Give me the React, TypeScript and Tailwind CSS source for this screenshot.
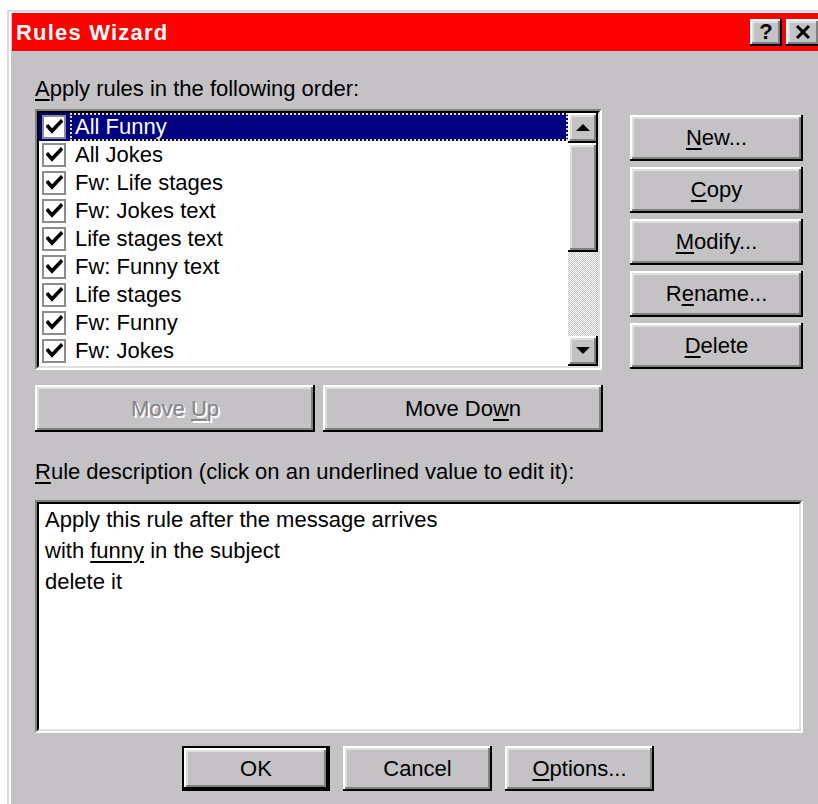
import React from "react";

const face = "bg-[#c4c2c5]";
const raised =
  "bg-[#c4c2c5] shadow-[inset_-2px_-2px_0_#000,inset_2px_2px_0_#fff,inset_-4px_-4px_0_#808080,inset_4px_4px_0_#dfdfdf]";
const font = "font-['Liberation_Sans',Arial,sans-serif]";

const rules = [
  "All Funny",
  "All Jokes",
  "Fw: Life stages",
  "Fw: Jokes text",
  "Life stages text",
  "Fw: Funny text",
  "Life stages",
  "Fw: Funny",
  "Fw: Jokes",
];

function Key({ children }: { children: React.ReactNode }) {
  return <span className="underline decoration-2 underline-offset-[3px]">{children}</span>;
}

function Check() {
  return (
    <div className="ml-[3px] flex h-[24px] w-[24px] shrink-0 items-center justify-center border-2 border-[#8c8b8e] bg-white">
      <svg width="17" height="16" viewBox="0 0 17 16">
        <polyline points="2,7.5 6,12 15,2.5" fill="none" stroke="#000" strokeWidth="3.6" strokeLinecap="square" />
      </svg>
    </div>
  );
}

function Arrow({ up }: { up?: boolean }) {
  return (
    <svg width="14" height="8" viewBox="0 0 14 8">
      <polygon points={up ? "7,0 14,7 0,7" : "0,0 14,0 7,7"} fill="#000" />
    </svg>
  );
}

function Btn({
  children,
  className = "",
  disabled,
}: {
  children: React.ReactNode;
  className?: string;
  disabled?: boolean;
}) {
  return (
    <div
      className={`${raised} flex items-center justify-center text-[22px] leading-none ${
        disabled ? "text-[#86858a] [text-shadow:2px_2px_0_#fff]" : "text-black"
      } ${className}`}
    >
      <span>{children}</span>
    </div>
  );
}

export default function App() {
  return (
    <div className={`${font} h-[804px] w-[818px] overflow-hidden bg-white pl-[7px] pt-[10px]`}>
      {/* window frame */}
      <div className="w-[840px] border-l-2 border-t-2 border-[#dcdbdd]">
        <div className={`${face} h-[800px] border-l-2 border-t-[1px] border-white pl-[1px]`}>
          {/* title bar */}
          <div className="flex h-[38px] items-center justify-between bg-[#ff0000] pl-[4px]">
            <span className="text-[22px] font-bold tracking-[1.2px] text-white">Rules Wizard</span>
            <div className="mr-[27px] flex gap-[4px]">
              <div className={`${raised} flex h-[27px] w-[32px] items-center justify-center pb-[1px] text-[22px] font-bold text-black`}>
                ?
              </div>
              <div className={`${raised} flex h-[27px] w-[34px] items-center justify-center`}>
                <svg width="16" height="14" viewBox="0 0 16 14">
                  <path d="M2 1 L14 13 M14 1 L2 13" stroke="#000" strokeWidth="3" />
                </svg>
              </div>
            </div>
          </div>

          {/* dialog body */}
          <div className="pl-[23px] pt-[25px] text-[22px] text-black">
            <div className="h-[26px] leading-[26px]">
              <Key>A</Key>pply rules in the following order:
            </div>

            <div className="mt-[7px] flex">
              <div className="flex w-[595px] flex-col">
                {/* rule list */}
                <div className="h-[261px] w-[567px] border-2 border-b-white border-l-[#808080] border-r-white border-t-[#808080]">
                  <div className="flex h-full border-2 border-b-[#dfdfdf] border-l-black border-r-[#dfdfdf] border-t-black bg-white">
                    <div className="w-[529px]">
                      {rules.map((r, i) => (
                        <div
                          key={r}
                          className={`flex h-[28px] items-center ${i === 0 ? "bg-[#000080] text-white" : ""}`}
                        >
                          <Check />
                          <div
                            className={`ml-[4px] flex h-[28px] flex-1 items-center border-2 border-dotted pl-[3px] leading-none ${
                              i === 0 ? "border-[#e6e27a]" : "border-transparent"
                            }`}
                          >
                            {r}
                          </div>
                        </div>
                      ))}
                    </div>
                    {/* scroll bar */}
                    <div className="flex w-[30px] flex-col">
                      <div className={`${raised} flex h-[30px] items-center justify-center`}>
                        <Arrow up />
                      </div>
                      <div className={`${raised} h-[109px]`} />
                      <div className="flex-1 bg-[#dcdcdc] bg-[image:repeating-conic-gradient(#c4c2c5_0_25%,#ffffff_0_50%)] bg-[length:2px_2px]" />
                      <div className={`${raised} flex h-[30px] items-center justify-center`}>
                        <Arrow />
                      </div>
                    </div>
                  </div>
                </div>

                <div className="mt-[15px] flex gap-[8px]">
                  <Btn disabled className="h-[47px] w-[280px]">
                    Move <Key>U</Key>p
                  </Btn>
                  <Btn className="h-[47px] w-[280px]">
                    Move Do<Key>w</Key>n
                  </Btn>
                </div>
              </div>

              {/* command buttons */}
              <div className="mt-[6px] flex flex-col gap-[6px]">
                <Btn className="h-[46px] w-[173px]">
                  <Key>N</Key>ew...
                </Btn>
                <Btn className="h-[46px] w-[173px]">
                  <Key>C</Key>opy
                </Btn>
                <Btn className="h-[46px] w-[173px]">
                  <Key>M</Key>odify...
                </Btn>
                <Btn className="h-[46px] w-[173px]">
                  R<Key>e</Key>name...
                </Btn>
                <Btn className="h-[46px] w-[173px]">
                  <Key>D</Key>elete
                </Btn>
              </div>
            </div>

            <div className="mt-[27px] h-[26px] leading-[26px]">
              <Key>R</Key>ule description (click on an underlined value to edit it):
            </div>

            {/* rule description */}
            <div className="mt-[15px] h-[233px] w-[768px] border-2 border-b-white border-l-[#808080] border-r-white border-t-[#808080]">
              <div className="h-full border-2 border-b-[#dfdfdf] border-l-black border-r-[#dfdfdf] border-t-black bg-white pl-[6px] leading-[31px]">
                <div>Apply this rule after the message arrives</div>
                <div>
                  with <Key>funny</Key> in the subject
                </div>
                <div>delete it</div>
              </div>
            </div>

            <div className="ml-[147px] mt-[13px] flex gap-[13px]">
              <div className="h-[45px] w-[148px] border-2 border-black">
                <Btn className="h-full w-full">OK</Btn>
              </div>
              <Btn className="h-[45px] w-[149px]">Cancel</Btn>
              <Btn className="h-[45px] w-[149px]">
                <Key>O</Key>ptions...
              </Btn>
            </div>
          </div>
        </div>
      </div>
    </div>
  );
}
